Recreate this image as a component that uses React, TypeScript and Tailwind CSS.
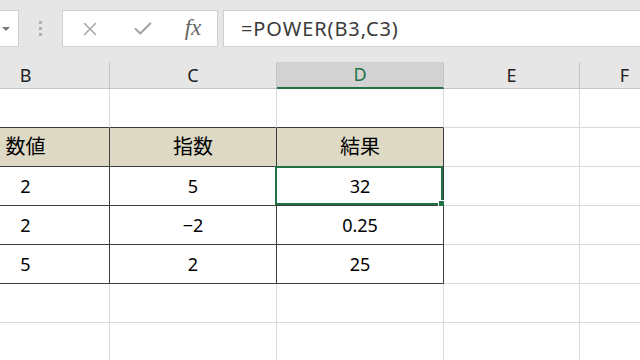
import { X, Check } from "lucide-react";

type Cell = { text?: string; head?: boolean; dark?: boolean; darkBottomOnly?: boolean; selected?: boolean };

const widths = ["w-[168px]", "w-[167px]", "w-[167px]", "w-[136px]", "w-[90px]"];
const letters = ["B", "C", "D", "E", "F"];

const rows: Cell[][] = [
    [{ darkBottomOnly: true }, { darkBottomOnly: true }, { darkBottomOnly: true }, {}, {}],
    [{ text: "数値", dark: true, head: true }, { text: "指数", dark: true, head: true }, { text: "結果", dark: true, head: true }, {}, {}],
    [{ text: "2", dark: true }, { text: "5", dark: true }, { text: "32", dark: true, selected: true }, {}, {}],
    [{ text: "2", dark: true }, { text: "−2", dark: true }, { text: "0.25", dark: true }, {}, {}],
    [{ text: "5", dark: true }, { text: "2", dark: true }, { text: "25", dark: true }, {}, {}],
    [{}, {}, {}, {}, {}],
    [{}, {}, {}, {}, {}],
];

const GridCell = ({ cell, w }: { cell: Cell; w: string }) => {
    const right = cell.dark ? "border-r-[#3c3c3c]" : "border-r-[#dadada]";
    const bottom = cell.dark || cell.darkBottomOnly ? "border-b-[#3c3c3c]" : "border-b-[#dadada]";
    const bg = cell.head ? "bg-[#ddd9c4] text-[20px]" : "bg-white text-[18px]";
    return (
        <div className={`${w} ${right} ${bottom} ${bg} relative h-[39px] shrink-0 border-r border-b flex items-center justify-center text-[#000]`}>
            {cell.text}
            {cell.selected && (
                <div className="absolute -left-[2px] -top-[1px] right-0 bottom-0 border-2 border-[#217346]">
                    <div className="absolute -right-[4px] -bottom-[4px] w-[7px] h-[7px] bg-[#217346] border border-white" />
                </div>
            )}
        </div>
    );
};

export default function App() {
    return (
        <div className="w-[640px] h-[360px] overflow-hidden bg-white" style={{ fontFamily: '"Noto Sans", "Noto Sans CJK JP", sans-serif' }}>
            {/* formula bar */}
            <div className="h-[62px] bg-[#e6e6e6] flex items-start pt-[10px]">
                <div className="w-[19px] h-[37px] shrink-0 bg-white border border-l-0 border-[#d0d0d0] flex items-center pl-[2px]">
                    <div className="w-0 h-0 border-l-[4px] border-r-[4px] border-t-[4px] border-l-transparent border-r-transparent border-t-[#777]" />
                </div>
                <div className="w-[43px] h-[37px] shrink-0 flex flex-col items-center justify-center gap-[3px]">
                    <div className="w-[3px] h-[3px] bg-[#b0b0b0]" />
                    <div className="w-[3px] h-[3px] bg-[#b0b0b0]" />
                    <div className="w-[3px] h-[3px] bg-[#b0b0b0]" />
                </div>
                <div className="w-[156px] h-[37px] shrink-0 bg-white border border-[#d0d0d0] flex items-center">
                    <div className="w-[52px] flex justify-center pl-[2px]">
                        <X size={22} strokeWidth={1.6} color="#a6a6a6" />
                    </div>
                    <div className="w-[52px] flex justify-center pl-[4px]">
                        <Check size={22} strokeWidth={2.4} color="#a6a6a6" />
                    </div>
                    <div className="w-[50px] flex justify-center pl-[2px] text-[23px] italic text-[#666]" style={{ fontFamily: '"Liberation Serif", serif' }}>
                        fx
                    </div>
                </div>
                <div className="flex-1 ml-[5px] h-[37px] bg-white border border-r-0 border-[#d0d0d0] flex items-center pl-[17px] text-[20px] text-[#3a3a3a] tracking-[0.9px]">
                    =POWER(B3,C3)
                </div>
            </div>

            <div className="ml-[-58px]">
                {/* column headers */}
                <div className="flex h-[27px]">
                    {letters.map((l, i) => (
                        <div
                            key={l}
                            className={`${widths[i]} shrink-0 h-[27px] flex items-center justify-center text-[18px] ${
                                l === "D"
                                    ? "bg-[#d2d2d2] text-[#217346] border-b-2 border-b-[#217346] border-r border-r-[#c6c6c6]"
                                    : "bg-[#e6e6e6] text-[#222] border-b border-b-[#c6c6c6] border-r border-r-[#c6c6c6]"
                            }`}
                        >
                            {l}
                        </div>
                    ))}
                </div>

                {rows.map((r, ri) => (
                    <div key={ri} className="flex">
                        {r.map((c, ci) => (
                            <GridCell key={ci} cell={c} w={widths[ci]} />
                        ))}
                    </div>
                ))}
            </div>
        </div>
    );
}
